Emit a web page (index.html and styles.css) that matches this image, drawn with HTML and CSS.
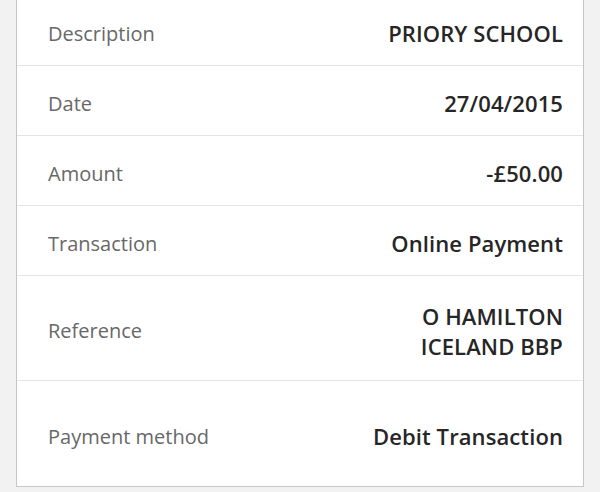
FILE: index.html
```html
<!DOCTYPE html>
<html>
<head>
<meta charset="utf-8">
<link rel="stylesheet" href="styles.css">
</head>
<body>
<div class="card">
  <div class="row"><span class="label">Description</span><span class="value">PRIORY SCHOOL</span></div>
  <div class="row"><span class="label">Date</span><span class="value">27/04/2015</span></div>
  <div class="row"><span class="label">Amount</span><span class="value">-£50.00</span></div>
  <div class="row"><span class="label">Transaction</span><span class="value">Online Payment</span></div>
  <div class="row tall"><span class="label">Reference</span><span class="value">O HAMILTON<br>ICELAND BBP</span></div>
  <div class="row tall"><span class="label">Payment method</span><span class="value">Debit Transaction</span></div>
</div>
</body>
</html>
```
FILE: styles.css
```css
html, body {
  margin: 0;
  padding: 0;
  background: #f2f2f2;
}
body {
  padding: 0 16px;
  font-family: "Open Sans", "Noto Sans", sans-serif;
  overflow: hidden;
  height: 492px;
}
.card {
  margin-top: -5px;
  background: #fff;
  border: 1px solid #c6c6c6;
}
.row {
  box-sizing: border-box;
  display: flex;
  align-items: center;
  justify-content: space-between;
  height: 70px;
  padding: 5px 20px 0 31px;
  border-bottom: 1px solid #e4e4e4;
}
.row:last-child {
  border-bottom: none;
  height: 105px;
}
.row.tall {
  height: 105px;
}
.label {
  font-size: 20px;
  color: #686868;
}
.value {
  font-size: 22px;
  font-weight: 600;
  color: #262626;
  text-align: right;
  line-height: 30px;
  letter-spacing: 0.1px;
}
```
